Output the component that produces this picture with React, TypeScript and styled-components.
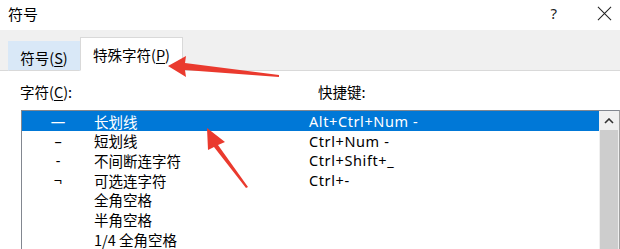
import styled, { createGlobalStyle } from "styled-components";

const GlobalStyle = createGlobalStyle`
  html, body {
    margin: 0;
    padding: 0;
    background: #ffffff;
  }
  body {
    font-family: "Noto Sans", "Noto Sans CJK SC", sans-serif;
    color: #000;
  }
`;

const rows = [
  { ch: "—", name: "长划线", key: "Alt+Ctrl+Num -" },
  { ch: "–", name: "短划线", key: "Ctrl+Num -" },
  { ch: "-", name: "不间断连字符", key: "Ctrl+Shift+_" },
  { ch: "¬", name: "可选连字符", key: "Ctrl+-" },
  { ch: "", name: "全角空格", key: "" },
  { ch: "", name: "半角空格", key: "" },
  { ch: "", name: "1/4 全角空格", key: "" },
];

const App = () => {
  return (
    <Dialog>
      <GlobalStyle />
      <TitleBar>
        <Title>符号</Title>
        <TitleButtons>
          <Help>?</Help>
          <CloseIcon viewBox="0 0 16 16">
            <path d="M1 1 L15 15 M15 1 L1 15" stroke="#222" strokeWidth="1.1" fill="none" />
          </CloseIcon>
        </TitleButtons>
      </TitleBar>

      <TabStrip>
        <Tab>
          符号(<u>S</u>)
        </Tab>
        <Tab $active>
          特殊字符(<u>P</u>)
        </Tab>
      </TabStrip>

      <Content>
        <Labels>
          <Label>
            字符(<u>C</u>):
          </Label>
          <Label $shortcut>快捷键:</Label>
        </Labels>
        <ListBox>
          <Rows>
            {rows.map((r, i) => (
              <Row key={i} $selected={i === 0}>
                <CharCell>{r.ch}</CharCell>
                <NameCell>{r.name}</NameCell>
                <KeyCell>{r.key}</KeyCell>
              </Row>
            ))}
          </Rows>
          <ScrollBar>
            <ScrollButton>
              <svg width="10" height="6" viewBox="0 0 10 6">
                <path d="M1 5 L5 1 L9 5" stroke="#333" strokeWidth="1.6" fill="none" />
              </svg>
            </ScrollButton>
            <Thumb />
          </ScrollBar>
        </ListBox>
      </Content>

      <Arrows width="620" height="249" viewBox="0 0 620 249">
        <path d="M168 66 L186 56 L185 63 L279 75 L279 77 L185 70 L186 77 Z" fill="#ea3a2e" />
        <path d="M207 128 L225 142 L218 145 L248 187 L246 188 L214 147 L208 150 Z" fill="#ea3a2e" />
      </Arrows>
    </Dialog>
  );
};

const Dialog = styled.div`
  position: relative;
  width: 620px;
  height: 249px;
  overflow: hidden;
  background: #ffffff;
  display: flex;
  flex-direction: column;
`;

const TitleBar = styled.div`
  height: 31px;
  display: flex;
  align-items: center;
  justify-content: space-between;
  padding-left: 8px;
  background: #ffffff;
`;

const Title = styled.span`
  font-family: "Noto Sans CJK SC", sans-serif;
  font-size: 15px;
  margin-top: -4px;
`;

const TitleButtons = styled.div`
  display: flex;
  align-items: center;
  margin-top: -4px;
`;

const Help = styled.span`
  font-family: "Noto Sans", sans-serif;
  font-size: 15px;
  color: #222;
  margin-right: 40px;
`;

const CloseIcon = styled.svg`
  width: 15px;
  height: 15px;
  margin-right: 8px;
`;

const TabStrip = styled.div`
  height: 41px;
  background: #f0f0f0;
  border-bottom: 1px solid #d9d9d9;
  display: flex;
  align-items: flex-end;
  padding-left: 8px;
`;

const Tab = styled.div<{ $active?: boolean }>`
  box-sizing: border-box;
  height: ${(p) => (p.$active ? "34px" : "30px")};
  width: ${(p) => (p.$active ? "103px" : "72px")};
  margin-bottom: -1px;
  display: flex;
  align-items: center;
  justify-content: center;
  font-family: "Noto Sans CJK SC", sans-serif;
  font-size: 14.5px;
  background: ${(p) => (p.$active ? "#ffffff" : "#d9e8f7")};
  border: 1px solid ${(p) => (p.$active ? "#d9d9d9" : "#d9e8f7")};
  border-bottom: ${(p) => (p.$active ? "1px solid #ffffff" : "1px solid #d9d9d9")};
  padding-top: ${(p) => (p.$active ? "0" : "2px")};

  u {
    text-underline-offset: 2px;
  }
`;

const Content = styled.div`
  flex: 1;
  display: flex;
  flex-direction: column;
  padding-left: 21px;
`;

const Labels = styled.div`
  height: 39px;
  display: flex;
  align-items: center;
  padding-top: 1px;
  box-sizing: border-box;
`;

const Label = styled.span<{ $shortcut?: boolean }>`
  font-family: "Noto Sans CJK SC", sans-serif;
  font-size: 14.5px;
  width: ${(p) => (p.$shortcut ? "auto" : "299px")};
  margin-left: -1px;

  u {
    text-underline-offset: 2px;
  }
`;

const ListBox = styled.div`
  flex: 1;
  display: flex;
  border: 1px solid #828790;
  border-bottom: none;
  border-right: 1px solid #a0a0a0;
`;

const Rows = styled.div`
  flex: 1;
  display: flex;
  flex-direction: column;
`;

const Row = styled.div<{ $selected?: boolean }>`
  height: 19.7px;
  display: flex;
  align-items: center;
  font-size: 14.5px;
  background: ${(p) => (p.$selected ? "#0078d7" : "transparent")};
  color: ${(p) => (p.$selected ? "#ffffff" : "#000000")};
`;

const CharCell = styled.span`
  width: 72px;
  text-align: center;
  font-family: "Noto Sans", sans-serif;
`;

const NameCell = styled.span`
  width: 215px;
  font-family: "Noto Sans CJK SC", sans-serif;
`;

const KeyCell = styled.span`
  font-family: "Noto Sans", sans-serif;
  letter-spacing: 0.6px;
`;

const ScrollBar = styled.div`
  width: 20px;
  display: flex;
  flex-direction: column;
  background: #f0f0f0;
`;

const ScrollButton = styled.div`
  height: 19px;
  display: flex;
  align-items: center;
  justify-content: center;
`;

const Thumb = styled.div`
  flex: 1;
  margin: 0 1px;
  background: #cdcdcd;
`;

const Arrows = styled.svg`
  position: absolute;
  left: 0;
  top: 0;
  pointer-events: none;
`;

export default App;
